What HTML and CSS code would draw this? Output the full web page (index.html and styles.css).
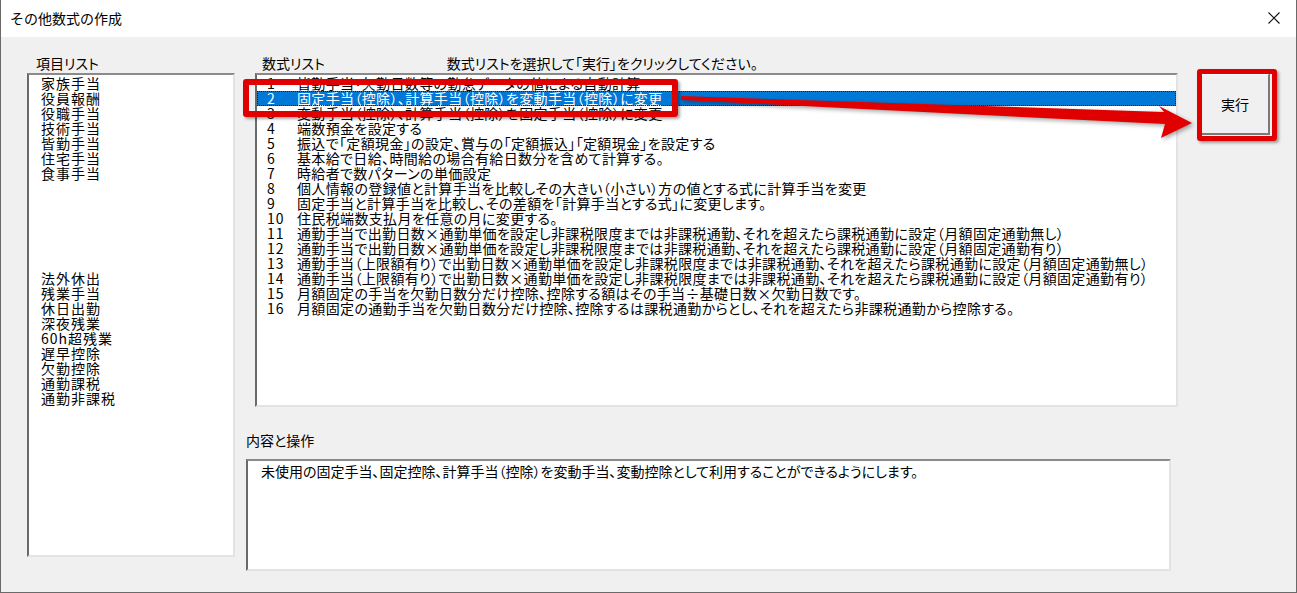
FILE: index.html
```html
<!DOCTYPE html>
<html lang="ja">
<head>
    <meta charset="UTF-8">
    <title>その他数式の作成</title>
    <link rel="stylesheet" href="styles.css">
</head>
<body>
    <div class="window">
        <div class="titlebar">
            <span class="title">その他数式の作成</span>
            <svg class="close" width="12" height="12" viewBox="0 0 12 12">
                <path d="M0.5 0.5 L11.5 11.5 M11.5 0.5 L0.5 11.5" stroke="#111" stroke-width="1.1" fill="none"/>
            </svg>
        </div>

        <div class="dialog">
            <div class="items-col">
                <div class="label label-items">項目リスト</div>
                <div class="listbox items">
                    <div class="row">家族手当</div>
                    <div class="row">役員報酬</div>
                    <div class="row">役職手当</div>
                    <div class="row">技術手当</div>
                    <div class="row">皆勤手当</div>
                    <div class="row">住宅手当</div>
                    <div class="row">食事手当</div>
                    <div class="row"></div>
                    <div class="row"></div>
                    <div class="row"></div>
                    <div class="row"></div>
                    <div class="row"></div>
                    <div class="row"></div>
                    <div class="row">法外休出</div>
                    <div class="row">残業手当</div>
                    <div class="row">休日出勤</div>
                    <div class="row">深夜残業</div>
                    <div class="row">60h超残業</div>
                    <div class="row">遅早控除</div>
                    <div class="row">欠勤控除</div>
                    <div class="row">通勤課税</div>
                    <div class="row">通勤非課税</div>
                </div>
            </div>

            <div class="formula-col">
                <div class="label-row">
                    <span class="label">数式リスト</span>
                    <span class="hint">数式リストを選択して「実行」をクリックしてください。</span>
                </div>
                <div class="listbox formulas">
                    <div class="frow"><span class="num">1</span>皆勤手当・欠勤日数等の勤怠データの値による自動計算</div>
                    <div class="frow selected"><span class="num">2</span>固定手当（控除）、計算手当（控除）を変動手当（控除）に変更</div>
                    <div class="frow"><span class="num">3</span>変動手当（控除）、計算手当（控除）を固定手当（控除）に変更</div>
                    <div class="frow"><span class="num">4</span>端数預金を設定する</div>
                    <div class="frow"><span class="num">5</span>振込で「定額現金」の設定、賞与の「定額振込」「定額現金」を設定する</div>
                    <div class="frow"><span class="num">6</span>基本給で日給、時間給の場合有給日数分を含めて計算する。</div>
                    <div class="frow"><span class="num">7</span>時給者で数パターンの単価設定</div>
                    <div class="frow"><span class="num">8</span>個人情報の登録値と計算手当を比較しその大きい（小さい）方の値とする式に計算手当を変更</div>
                    <div class="frow"><span class="num">9</span>固定手当と計算手当を比較し、その差額を「計算手当とする式」に変更します。</div>
                    <div class="frow"><span class="num">10</span>住民税端数支払月を任意の月に変更する。</div>
                    <div class="frow"><span class="num">11</span>通勤手当で出勤日数×通勤単価を設定し非課税限度までは非課税通勤、それを超えたら課税通勤に設定（月額固定通勤無し）</div>
                    <div class="frow"><span class="num">12</span>通勤手当で出勤日数×通勤単価を設定し非課税限度までは非課税通勤、それを超えたら課税通勤に設定（月額固定通勤有り）</div>
                    <div class="frow"><span class="num">13</span>通勤手当（上限額有り）で出勤日数×通勤単価を設定し非課税限度までは非課税通勤、それを超えたら課税通勤に設定（月額固定通勤無し）</div>
                    <div class="frow"><span class="num">14</span>通勤手当（上限額有り）で出勤日数×通勤単価を設定し非課税限度までは非課税通勤、それを超えたら課税通勤に設定（月額固定通勤有り）</div>
                    <div class="frow"><span class="num">15</span>月額固定の手当を欠勤日数分だけ控除、控除する額はその手当÷基礎日数×欠勤日数です。</div>
                    <div class="frow"><span class="num">16</span>月額固定の通勤手当を欠勤日数分だけ控除、控除するは課税通勤からとし、それを超えたら非課税通勤から控除する。</div>
                </div>

                <div class="label label-desc">内容と操作</div>
                <div class="descbox">未使用の固定手当、固定控除、計算手当（控除）を変動手当、変動控除として利用することができるようにします。</div>
            </div>

            <div class="run-col">
                <button class="run">実行</button>
            </div>
        </div>

        <!-- red annotation marks drawn over the dialog -->
        <div class="mark mark-row"></div>
        <div class="mark mark-btn"></div>
        <svg class="arrow" width="1297" height="593" viewBox="0 0 1297 593">
            <polygon points="680,96 1163,112 1158,106 1191,123 1160,138 1164,124 680,100" fill="#e00000"/>
        </svg>
    </div>
</body>
</html>
```

FILE: styles.css
```css
body {
    margin: 0;
    font-family: "Noto Sans CJK JP", "Noto Sans", sans-serif;
    font-size: 14px;
    color: #000;
    background-color: #f0f0f0;
}
.window {
    position: relative;
    width: 1297px;
    height: 593px;
    box-sizing: border-box;
    border: 1px solid #6a6a6a;
    border-top: none;
    background-color: #f0f0f0;
    overflow: hidden;
}
.titlebar {
    height: 37px;
    background-color: #ffffff;
    display: flex;
    align-items: center;
    justify-content: space-between;
    padding: 0 16px 0 9px;
}
.title {
    font-size: 14px;
    line-height: 16px;
    padding-bottom: 1px;
}
.close {
    display: block;
    margin-bottom: 1px;
}
.dialog {
    display: flex;
    padding: 17px 0 0 26px;
}
.label {
    height: 19px;
    line-height: 19px;
    font-feature-settings: "palt";
}
.label-items {
    padding-left: 9px;
}
.listbox {
    box-sizing: border-box;
    background-color: #ffffff;
    border: 2px solid;
    border-color: #8a8a8a #e3e3e3 #e3e3e3 #6a6a6a;
    font-feature-settings: "palt";
    line-height: 15px;
    white-space: nowrap;
    overflow: hidden;
}
.items-col {
    width: 208px;
}
.items {
    height: 484px;
    padding: 1px 0 0 12px;
    letter-spacing: 1px;
}
.items .row {
    height: 15px;
}
.formula-col {
    margin-left: 11px;
    width: 932px;
}
.label-row {
    display: flex;
    height: 19px;
    line-height: 19px;
    padding-left: 16px;
    font-feature-settings: "palt";
}
.hint {
    margin-left: 122px;
}
.formulas {
    margin-left: 9px;
    width: 923px;
    height: 334px;
    padding-top: 1px;
    letter-spacing: 0.35px;
}
.frow {
    height: 15px;
    padding-left: 10px;
    display: flex;
}
.frow .num {
    width: 30px;
    flex-shrink: 0;
    letter-spacing: 1px;
}
.frow.selected {
    background-color: #0078d7;
    color: #ffffff;
    outline: 1px dotted #222;
    outline-offset: -1px;
}
.label-desc {
    margin-top: 24px;
}
.descbox {
    box-sizing: border-box;
    margin-top: 9px;
    width: 925px;
    height: 112px;
    background-color: #ffffff;
    border: 2px solid;
    border-color: #8a8a8a #e3e3e3 #e3e3e3 #6a6a6a;
    padding: 3px 0 0 13px;
    line-height: 15px;
    font-feature-settings: "palt";
}
.run-col {
    margin-left: 22px;
    padding-top: 19px;
}
.run {
    width: 70px;
    height: 62px;
    font-family: "Noto Sans CJK JP", sans-serif;
    font-size: 14px;
    background-color: #f0f0f0;
    border: 2px solid;
    border-color: #ffffff #7a7a7a #7a7a7a #ffffff;
    padding: 0;
}

/* annotations */
.mark {
    position: absolute;
    box-sizing: border-box;
    border: 6px solid #e00000;
    border-radius: 3px;
    box-shadow: 2px 2px 3px rgba(0, 0, 0, 0.35);
}
.mark-row {
    left: 242px;
    top: 79px;
    width: 435px;
    height: 38px;
}
.mark-btn {
    left: 1196px;
    top: 69px;
    width: 80px;
    height: 72px;
    border-width: 5px;
}
.arrow {
    position: absolute;
    left: 0;
    top: 0;
    pointer-events: none;
    filter: drop-shadow(2px 2px 2px rgba(0, 0, 0, 0.35));
}
```
